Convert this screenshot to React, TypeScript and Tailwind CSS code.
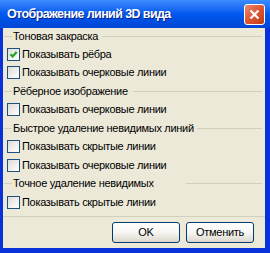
const FONT = { fontFamily: '"Liberation Sans", Arial, sans-serif' };

function GroupLabel({ text, gap = 3 }: { text: string; gap?: number }) {
  return (
    <div className="flex items-center h-full">
      <div className="w-[8px] ml-[1px] border-t border-[#D0D0BF]" />
      <span className="px-[1px] text-[11px] tracking-[-0.3px] leading-none text-black whitespace-nowrap">
        {text}
      </span>
      <div className="flex-1 mr-[3px] border-t border-[#D0D0BF]" style={{ marginLeft: gap }} />
    </div>
  );
}

function CheckBox({ label, checked }: { label: string; checked?: boolean }) {
  return (
    <div className="flex items-center h-full pl-[4px]">
      <div className="w-[13px] h-[13px] border border-[#1C5180] bg-gradient-to-br from-[#DCDCD7] to-white flex items-center justify-center">
        {checked && (
          <svg width="11" height="11" viewBox="0 0 11 11">
            <path d="M2.5 5.2 L4.6 7.4 L8.7 3" fill="none" stroke="#21A121" strokeWidth="2.2" />
          </svg>
        )}
      </div>
      <span className="ml-[2px] text-[11px] tracking-[-0.3px] leading-none text-black whitespace-nowrap">
        {label}
      </span>
    </div>
  );
}

function XpButton({ children }: { children: string }) {
  return (
    <button
      type="button"
      className="w-[68px] h-[21px] rounded-[3px] border border-[#003C74] bg-gradient-to-b from-white via-[#F7F6F2] to-[#DCD7CD] text-[11px] tracking-[-0.3px] leading-none text-black"
      style={FONT}
    >
      {children}
    </button>
  );
}

const ROWS: ({ kind: "group"; text: string; gap?: number } | { kind: "cb"; text: string; checked?: boolean })[] = [
  { kind: "group", text: "Тоновая закраска" },
  { kind: "cb", text: "Показывать рёбра", checked: true },
  { kind: "cb", text: "Показывать очерковые линии" },
  { kind: "group", text: "Рёберное изображение", gap: 4 },
  { kind: "cb", text: "Показывать очерковые линии" },
  { kind: "group", text: "Быстрое удаление невидимых линий", gap: 2 },
  { kind: "cb", text: "Показывать скрытые линии" },
  { kind: "cb", text: "Показывать очерковые линии" },
  { kind: "group", text: "Точное удаление невидимых", gap: 31 },
  { kind: "cb", text: "Показывать скрытые линии" },
];

export default function App() {
  return (
    <div className="w-[270px] h-[253px] flex flex-col bg-[#0831D9] overflow-hidden" style={FONT}>
      {/* Title bar */}
      <div className="h-[28px] shrink-0 flex items-center pl-[7px] pr-[5px] bg-gradient-to-b from-[#3D8BFF] via-[#0058EE] to-[#0046D6]">
        <span className="flex-1 text-[12.5px] tracking-[-0.6px] font-bold text-white whitespace-nowrap [text-shadow:1px_1px_0_#0A1E8A]">
          Отображение линий 3D вида
        </span>
        <div className="w-[21px] h-[21px] rounded-[3px] border border-white bg-gradient-to-br from-[#EB8A70] via-[#DD5530] to-[#BE3C16] flex items-center justify-center">
          <svg width="11" height="11" viewBox="0 0 11 11">
            <path d="M1.5 1.5 L9.5 9.5 M9.5 1.5 L1.5 9.5" stroke="white" strokeWidth="2.2" />
          </svg>
        </div>
      </div>

      {/* Body */}
      <div className="flex-1 ml-[3px] mr-[5px] mb-[5px] bg-[#ECE9D8] flex flex-col">
        {ROWS.map((r, i) => (
          <div key={i} className={i === 0 ? "h-[17px]" : "h-[18.5px]"}>
            {r.kind === "group" ? (
              <GroupLabel text={r.text} gap={r.gap} />
            ) : (
              <CheckBox label={r.text} checked={r.checked} />
            )}
          </div>
        ))}
        <div className="mt-[4px] border-t border-[#D0D0BF]" />
        <div className="mt-[5px] flex justify-end gap-[6px] pr-[11px]">
          <XpButton>OK</XpButton>
          <XpButton>Отменить</XpButton>
        </div>
      </div>
    </div>
  );
}
